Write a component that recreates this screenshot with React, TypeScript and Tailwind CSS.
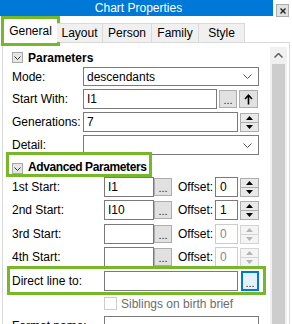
import React from 'react'

function Chevron({ className = '' }: { className?: string }) {
  return (
    <svg width="9" height="5" viewBox="0 0 9 5" className={className}>
      <polyline points="0.5,0.5 4.5,4.5 8.5,0.5" fill="none" stroke="currentColor" strokeWidth="1" />
    </svg>
  )
}

function SectionToggle() {
  return (
    <div className="w-[11px] h-[11px] border border-[#a8a8a8] bg-[#e6e6e6] flex items-center justify-center text-[#333]">
      <svg width="7" height="4" viewBox="0 0 7 4">
        <polyline points="0.5,0.5 3.5,3.5 6.5,0.5" fill="none" stroke="currentColor" strokeWidth="1" />
      </svg>
    </div>
  )
}

function Spin({ disabled = false }: { disabled?: boolean }) {
  const box = disabled
    ? 'h-[10px] border border-[#d4d4d4] bg-[#f4f4f4] flex items-center justify-center text-[#b5b5b5]'
    : 'h-[10px] border border-[#adadad] bg-[#e9e9e9] flex items-center justify-center text-black'
  return (
    <div className="ml-[2px] w-[19px] flex flex-col">
      <div className={box}>
        <svg width="7" height="4" viewBox="0 0 7 4">
          <polygon points="0,4 7,4 3.5,0" fill="currentColor" />
        </svg>
      </div>
      <div className={box + ' -mt-[1px]'}>
        <svg width="7" height="4" viewBox="0 0 7 4">
          <polygon points="0,0 7,0 3.5,4" fill="currentColor" />
        </svg>
      </div>
    </div>
  )
}

function Dots({ focused = false }: { focused?: boolean }) {
  return (
    <div
      className={
        focused
          ? 'w-[18px] h-[20px] border-2 border-[#0078d7] bg-[#e5f1fb] flex items-end justify-center pb-[2px] text-[11px] leading-[8px] text-[#222]'
          : 'w-[18px] h-[18px] border border-[#adadad] bg-[#e1e1e1] flex items-end justify-center pb-[3px] text-[11px] leading-[8px] text-[#222]'
      }
    >
      ...
    </div>
  )
}

function TextBox({ value = '', className = '' }: { value?: string; className?: string }) {
  return (
    <div className={'h-[20px] border border-[#7a7a7a] bg-white pl-[3px] flex items-center ' + className}>{value}</div>
  )
}

function Select({ value }: { value: string }) {
  return (
    <div className="w-[176px] h-[19px] border border-[#7a7a7a] bg-white pl-[3px] pr-[6px] flex items-center justify-between">
      <span>{value}</span>
      <Chevron className="text-[#555]" />
    </div>
  )
}

function AdvRow({
  label,
  start,
  offset,
  disabled = false,
  className = '',
}: {
  label: string
  start: string
  offset: string
  disabled?: boolean
  className?: string
}) {
  return (
    <div className={'h-[20px] pl-[9px] flex items-center ' + className}>
      <span className="w-[92px]">{label}</span>
      <TextBox value={start} className="w-[50px]" />
      <Dots />
      <span className="ml-[6px] w-[37px]">Offset:</span>
      {disabled ? (
        <div className="w-[23px] h-[20px] border border-[#cccccc] bg-white pl-[4px] flex items-center text-[#8a8a8a]">
          {offset}
        </div>
      ) : (
        <div className="w-[23px] h-[20px] border border-[#7a7a7a] bg-white pl-[4px] flex items-center">{offset}</div>
      )}
      <Spin disabled={disabled} />
    </div>
  )
}

export default function App() {
  return (
    <div className="w-[292px] h-[324px] overflow-hidden bg-white flex flex-col font-['Liberation_Sans',Arial,sans-serif] text-[12px] text-black">
      {/* title bar */}
      <div className="h-[17px] flex items-start shrink-0">
        <div className="w-[273px] h-[16px] bg-[#0078d7] text-white text-center leading-[16px] pl-[4px]">
          Chart Properties
        </div>
        <div className="ml-[3px] mt-[4px] w-[13px] h-[13px] border border-[#adadad] bg-[#e1e1e1] flex items-center justify-center text-[#222]">
          <svg width="6" height="6" viewBox="0 0 6 6">
            <path d="M0.5 0.5 L5.5 5.5 M5.5 0.5 L0.5 5.5" stroke="currentColor" strokeWidth="1.4" />
          </svg>
        </div>
      </div>

      {/* tabs */}
      <div className="mt-[3px] h-[22px] pl-[4px] flex items-end shrink-0 relative z-10">
        <div className="w-[53px] h-[24px] -mb-[1px] bg-white flex items-center justify-center outline-3 outline-[#76b82a]">
          General
        </div>
        <div className="w-[46px] h-[19px] bg-[#f0f0f0] border-t border-r border-[#d9d9d9] flex items-center justify-center">
          Layout
        </div>
        <div className="w-[49px] h-[19px] bg-[#f0f0f0] border-t border-r border-[#d9d9d9] flex items-center justify-center">
          Person
        </div>
        <div className="w-[47px] h-[19px] bg-[#f0f0f0] border-t border-r border-[#d9d9d9] flex items-center justify-center">
          Family
        </div>
        <div className="w-[46px] h-[19px] bg-[#f0f0f0] border-t border-r border-[#d9d9d9] flex items-center justify-center">
          Style
        </div>
      </div>

      {/* panel */}
      <div className="ml-[2px] w-[288px] flex-1 border-l border-t border-r border-[#d9d9d9] flex">
        <div className="w-[267px] flex flex-col">
          <div className="mt-[8px] h-[13px] pl-[9px] flex items-center gap-[5px]">
            <SectionToggle />
            <span className="font-bold">Parameters</span>
          </div>

          <div className="mt-[3px] h-[19px] pl-[9px] flex items-center">
            <span className="w-[71px]">Mode:</span>
            <Select value="descendants" />
          </div>

          <div className="mt-[3px] h-[20px] pl-[9px] flex items-center">
            <span className="w-[71px]">Start With:</span>
            <TextBox value="I1" className="w-[134px]" />
            <div className="ml-[2px]">
              <Dots />
            </div>
            <div className="ml-[2px] w-[19px] h-[18px] border border-[#adadad] bg-[#e1e1e1] flex items-center justify-center">
              <svg width="9" height="11" viewBox="0 0 9 11">
                <path d="M4.5 10.5 V1.5 M1 5 L4.5 1.2 L8 5" fill="none" stroke="#000" strokeWidth="1.6" />
              </svg>
            </div>
          </div>

          <div className="mt-[3px] h-[20px] pl-[9px] flex items-center">
            <span className="w-[71px]">Generations:</span>
            <TextBox value="7" className="w-[155px]" />
            <Spin />
          </div>

          <div className="mt-[3px] h-[20px] pl-[9px] flex items-center">
            <span className="w-[71px]">Detail:</span>
            <div className="w-[176px] h-[20px] border border-[#7a7a7a] bg-white pr-[6px] flex items-center justify-end">
              <Chevron className="text-[#555]" />
            </div>
          </div>

          <div className="ml-[6px] w-[140px] h-[19px] pl-[3px] flex items-end gap-[5px] outline-3 outline-[#76b82a] relative">
            <SectionToggle />
            <span className="font-bold tracking-[-0.4px] leading-[12px] mb-[1px] whitespace-nowrap">Advanced Parameters</span>
          </div>

          <AdvRow label="1st Start:" start="I1" offset="0" className="mt-[3px]" />
          <AdvRow label="2nd Start:" start="I10" offset="1" className="mt-[3px]" />
          <AdvRow label="3rd Start:" start="" offset="0" disabled className="mt-[4px]" />
          <AdvRow label="4th Start:" start="" offset="0" disabled className="mt-[3px]" />

          <div className="mt-[2px] ml-[7px] w-[253px] h-[23px] pt-[2px] pl-[2px] flex items-start outline-3 outline-[#76b82a]">
            <span className="w-[92px] h-[20px] flex items-center">Direct line to:</span>
            <TextBox className="w-[134px]" />
            <div className="ml-[3px]">
              <Dots focused />
            </div>
          </div>

          <div className="mt-[5px] h-[13px] pl-[101px] flex items-center">
            <div className="w-[13px] h-[13px] border border-[#cccccc] bg-white" />
            <span className="ml-[4px] text-[#6d6d6d]">Siblings on birth brief</span>
          </div>

          <div className="mt-[6px] h-[20px] pl-[9px] flex items-center">
            <span className="w-[92px] whitespace-nowrap">Format name:</span>
            <div className="w-[155px] h-[20px] border border-[#7a7a7a] bg-white" />
          </div>
        </div>

        {/* scrollbar */}
        <div className="mt-[4px] w-[17px] bg-[#f0f0f0] flex flex-col">
          <div className="h-[17px] flex items-center justify-center text-[#606060]">
            <svg width="9" height="5" viewBox="0 0 9 5">
              <polyline points="0.5,4.5 4.5,0.5 8.5,4.5" fill="none" stroke="currentColor" strokeWidth="1.5" />
            </svg>
          </div>
          <div className="mx-[2px] flex-1 bg-[#cdcdcd]" />
        </div>
      </div>
    </div>
  )
}
